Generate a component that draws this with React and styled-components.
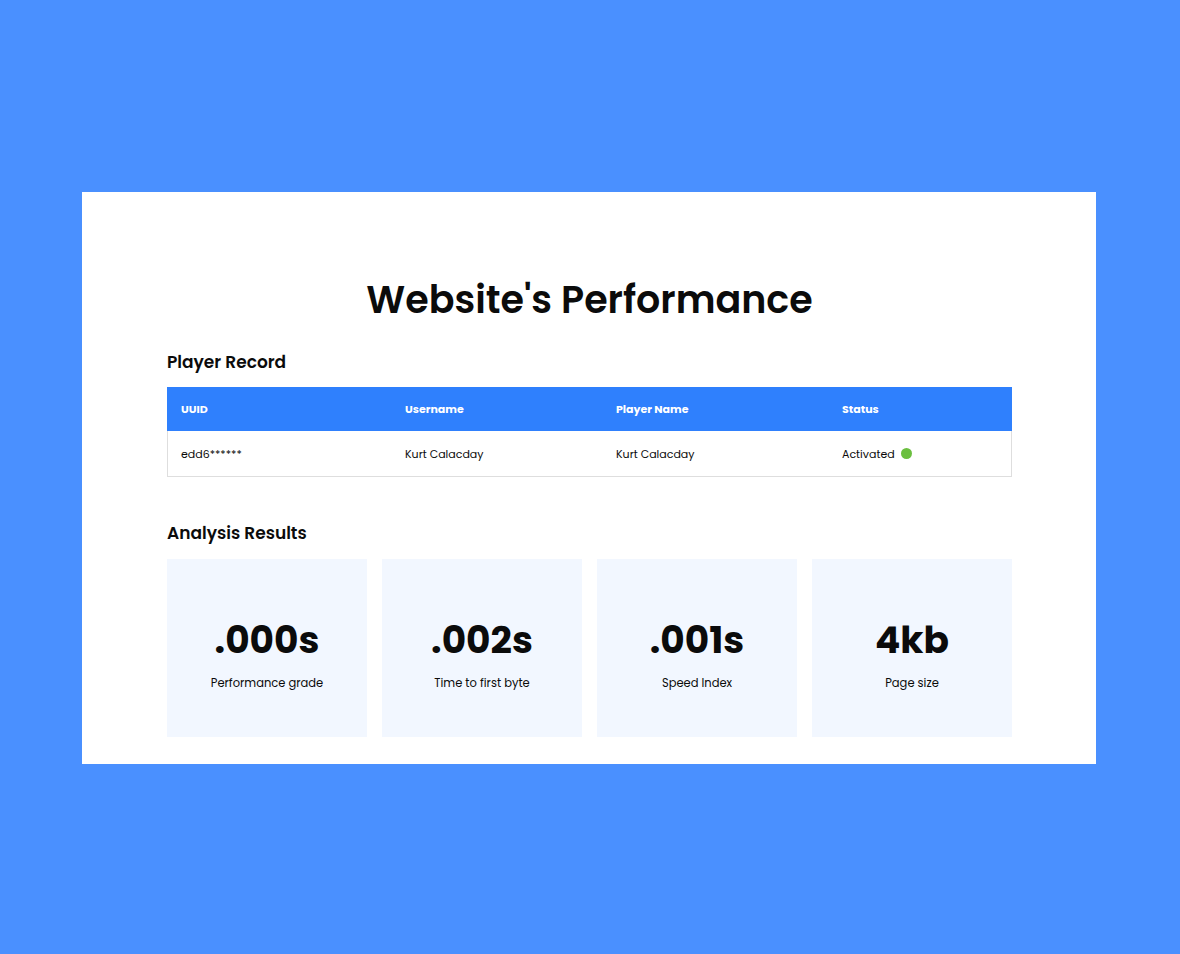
import React from 'react'
import styled, { createGlobalStyle } from 'styled-components'

const GlobalStyle = createGlobalStyle`
  * { box-sizing: border-box; }
  body {
    margin: 0;
    font-family: "Poppins", Inter, "Noto Sans", sans-serif;
    color: #0b0b0b;
  }
`

const players = [
  { uuid: 'edd6******', username: 'Kurt Calacday', name: 'Kurt Calacday', status: 'Activated' },
]

const results = [
  { value: '.000s', label: 'Performance grade' },
  { value: '.002s', label: 'Time to first byte' },
  { value: '.001s', label: 'Speed Index' },
  { value: '4kb', label: 'Page size' },
]

const App = () => {
  return (
    <Page>
      <GlobalStyle />
      <Card>
        <Title>Website's Performance</Title>

        <SectionTitle>Player Record</SectionTitle>
        <Table>
          <HeadRow>
            <HeadCell>UUID</HeadCell>
            <HeadCell>Username</HeadCell>
            <HeadCell>Player Name</HeadCell>
            <HeadCell>Status</HeadCell>
          </HeadRow>
          {players.map((p) => (
            <BodyRow key={p.uuid}>
              <Cell>{p.uuid}</Cell>
              <Cell>{p.username}</Cell>
              <Cell>{p.name}</Cell>
              <Cell>
                {p.status}
                <Dot />
              </Cell>
            </BodyRow>
          ))}
        </Table>

        <SectionTitle $top={44}>Analysis Results</SectionTitle>
        <Results>
          {results.map((r) => (
            <ResultBox key={r.label}>
              <Value>{r.value}</Value>
              <Label>{r.label}</Label>
            </ResultBox>
          ))}
        </Results>
      </Card>
    </Page>
  )
}

const Page = styled.div`
  min-height: 100vh;
  background: #4a90ff;
  display: flex;
  align-items: center;
  justify-content: center;
  padding: 2px 2px 0 0;
`

const Card = styled.div`
  width: 1014px;
  height: 572px;
  background: #ffffff;
  padding: 85px 84px 27px 85px;
  display: flex;
  flex-direction: column;
`

const Title = styled.h1`
  margin: 0;
  text-align: center;
  font-size: 38px;
  line-height: 46px;
  font-weight: 600;
`

const SectionTitle = styled.h2`
  margin: ${(props) => props.$top || 26.5}px 0 13.5px 0;
  font-size: 17px;
  line-height: 24px;
  font-weight: 600;
`

const Table = styled.div`
  border: 1px solid #dedede;
  border-top: none;
`

const columns = '224px 211px 226px 1fr'

const HeadRow = styled.div`
  display: grid;
  grid-template-columns: ${columns};
  height: 44px;
  align-items: center;
  background: #2f80fd;
  margin: 0 -1px;
  padding-left: 14px;
`

const HeadCell = styled.div`
  color: #ffffff;
  font-size: 11px;
  font-weight: 700;
`

const BodyRow = styled.div`
  display: grid;
  grid-template-columns: ${columns};
  height: 45px;
  align-items: center;
  padding-left: 13px;
  padding-top: 2px;
`

const Cell = styled.div`
  font-size: 11px;
  font-weight: 400;
  display: flex;
  align-items: center;
  gap: 6px;
`

const Dot = styled.span`
  width: 11px;
  height: 11px;
  border-radius: 50%;
  background: #6bbf3f;
  display: inline-block;
  margin-top: -2px;
`

const Results = styled.div`
  display: grid;
  grid-template-columns: repeat(4, 1fr);
  gap: 15px;
`

const ResultBox = styled.div`
  height: 178px;
  background: #f2f7ff;
  display: flex;
  flex-direction: column;
  align-items: center;
  justify-content: center;
  padding-top: 12px;
`

const Value = styled.div`
  font-size: 37.5px;
  line-height: 48px;
  font-weight: 700;
`

const Label = styled.div`
  margin-top: 11px;
  font-size: 11.5px;
  line-height: 16px;
`

export default App
